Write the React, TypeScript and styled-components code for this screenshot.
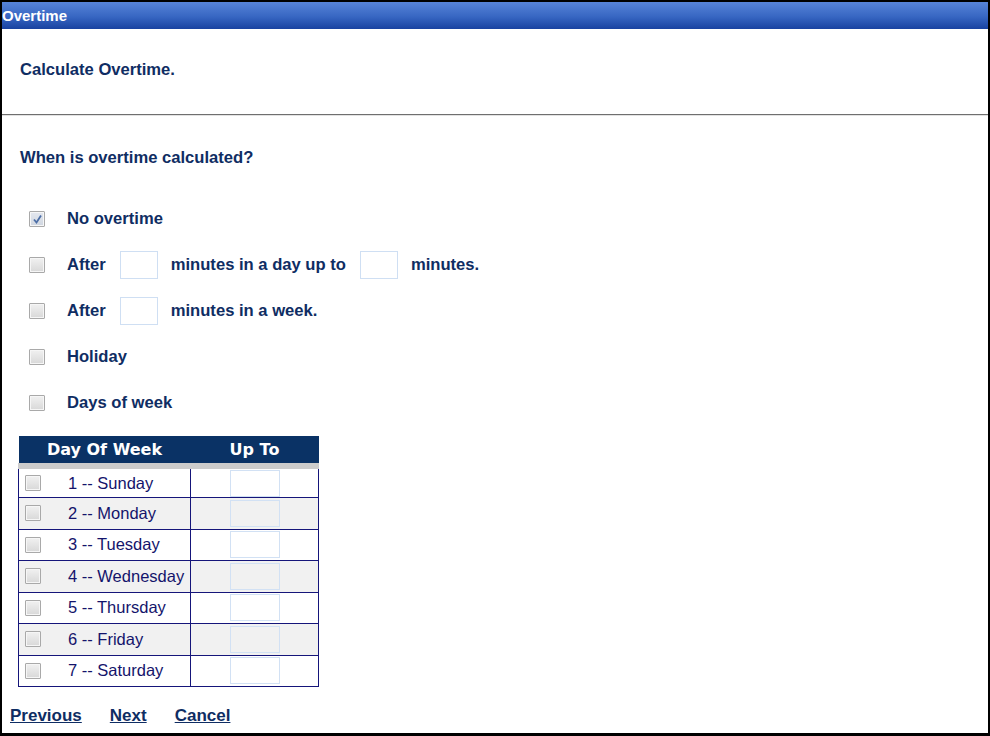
import styled, {createGlobalStyle} from "styled-components";

const GlobalStyle = createGlobalStyle`
  html, body {
    margin: 0;
    padding: 0;
    background: #fff;
  }
  body {
    font-family: "Liberation Sans", Arial, sans-serif;
  }
`;

const Frame = styled.div`
  box-sizing: border-box;
  width: 990px;
  height: 736px;
  border: 2px solid #000;
  border-bottom-width: 3px;
  display: flex;
  flex-direction: column;
  background: #fff;
`;

const TitleBar = styled.div`
  height: 27px;
  display: flex;
  align-items: center;
  padding-left: 0;
  background: linear-gradient(#5784d8, #3766c2 55%, #1842a0);
  color: #fff;
  font-weight: bold;
  font-size: 15px;
`;

const Intro = styled.div`
  height: 86px;
  display: flex;
  align-items: center;
  padding: 0 0 4px 18px;
  box-sizing: border-box;
  border-bottom: 1px solid #6f6f6f;
  box-shadow: 0 1px 0 #e2e2e2;
`;

const Heading = styled.div`
  color: #0f2d63;
  font-weight: bold;
  font-size: 16.6px;
`;

const Body = styled.div`
  padding: 33px 0 0 18px;
  display: flex;
  flex-direction: column;
`;

const Options = styled.div`
  display: flex;
  flex-direction: column;
  gap: 18px;
  margin-top: 37px;
  padding-left: 9px;
`;

const OptionRow = styled.div`
  display: flex;
  align-items: center;
  height: 28px;
  color: #0f2d63;
  font-weight: bold;
  font-size: 16.6px;
`;

const Box = styled.span<{ $checked?: boolean }>`
  box-sizing: border-box;
  width: 16px;
  height: 16px;
  flex: none;
  border: 1px solid #a9a9a9;
  border-radius: 1px;
  background: ${p => (p.$checked ? "linear-gradient(#e4e8ef, #cfd6e0)" : "linear-gradient(#f1f1f1, #d8d8d8)")};
  box-shadow: inset 0 0 0 1px #f6f6f6;
  display: flex;
  align-items: center;
  justify-content: center;
`;

const Label = styled.span`
  margin-left: 22px;
`;

const Text = styled.span`
  margin-left: 13px;
`;

const SmallInput = styled.span`
  box-sizing: border-box;
  width: 38px;
  height: 28px;
  margin-left: 14px;
  border: 1px solid #cfdff3;
  background: #fff;
`;

const Table = styled.table`
  border-collapse: collapse;
  width: 301px;
  margin: 19px 0 0 -2px;
  font-size: 16.5px;
`;

const HeadCell = styled.th`
  height: 27px;
  padding: 0;
  background: #0a3265;
  color: #fff;
  font-family: "DejaVu Sans", Verdana, sans-serif;
  font-weight: bold;
  font-size: 16px;
  text-align: center;
  border-bottom: 6px solid #cccccc;
`;

const Row = styled.tr<{ $alt: boolean }>`
  background: ${p => (p.$alt ? "#f1f1f1" : "#fff")};
`;

const DayCell = styled.td`
  box-sizing: border-box;
  width: 172px;
  height: 31.5px;
  padding: 0 0 0 6px;
  border: 1px solid #15157a;
  color: #14146b;
  white-space: nowrap;
`;

const DayInner = styled.div`
  display: flex;
  align-items: center;
  gap: 27px;
`;

const UpToCell = styled.td`
  box-sizing: border-box;
  height: 31.5px;
  padding: 0;
  border: 1px solid #15157a;
  text-align: center;
`;

const UpToInput = styled.span`
  display: inline-block;
  vertical-align: middle;
  box-sizing: border-box;
  width: 50px;
  height: 27px;
  border: 1px solid #d2e1f4;
  background: transparent;
`;

const Links = styled.div`
  display: flex;
  gap: 28px;
  margin-top: 19px;
  padding-left: 8px;
`;

const NavLink = styled.a`
  color: #0f2d63;
  font-weight: bold;
  font-size: 17px;
  text-decoration: underline;
  cursor: pointer;
`;

const Check = () => (
  <svg width="11" height="11" viewBox="0 0 11 11">
    <path d="M2 5.5 L4.5 8.5 L9 1.5" fill="none" stroke="#4c6ea6" strokeWidth="1.8" />
  </svg>
);

const days = ["1 -- Sunday", "2 -- Monday", "3 -- Tuesday", "4 -- Wednesday", "5 -- Thursday", "6 -- Friday", "7 -- Saturday"];

const App = () => {
  return (
    <>
      <GlobalStyle />
      <Frame>
        <TitleBar>Overtime</TitleBar>
        <Intro>
          <Heading>Calculate Overtime.</Heading>
        </Intro>
        <Body>
          <Heading>When is overtime calculated?</Heading>
          <Options>
            <OptionRow>
              <Box $checked><Check /></Box>
              <Label>No overtime</Label>
            </OptionRow>
            <OptionRow>
              <Box />
              <Label>After</Label>
              <SmallInput />
              <Text>minutes in a day up to</Text>
              <SmallInput />
              <Text>minutes.</Text>
            </OptionRow>
            <OptionRow>
              <Box />
              <Label>After</Label>
              <SmallInput />
              <Text>minutes in a week.</Text>
            </OptionRow>
            <OptionRow>
              <Box />
              <Label>Holiday</Label>
            </OptionRow>
            <OptionRow>
              <Box />
              <Label>Days of week</Label>
            </OptionRow>
          </Options>
          <Table>
            <thead>
              <tr>
                <HeadCell>Day Of Week</HeadCell>
                <HeadCell>Up To</HeadCell>
              </tr>
            </thead>
            <tbody>
              {days.map((d, i) => (
                <Row key={d} $alt={i % 2 === 1}>
                  <DayCell>
                    <DayInner>
                      <Box />
                      <span>{d}</span>
                    </DayInner>
                  </DayCell>
                  <UpToCell>
                    <UpToInput />
                  </UpToCell>
                </Row>
              ))}
            </tbody>
          </Table>
        </Body>
        <Links>
          <NavLink>Previous</NavLink>
          <NavLink>Next</NavLink>
          <NavLink>Cancel</NavLink>
        </Links>
      </Frame>
    </>
  );
};

export default App;
